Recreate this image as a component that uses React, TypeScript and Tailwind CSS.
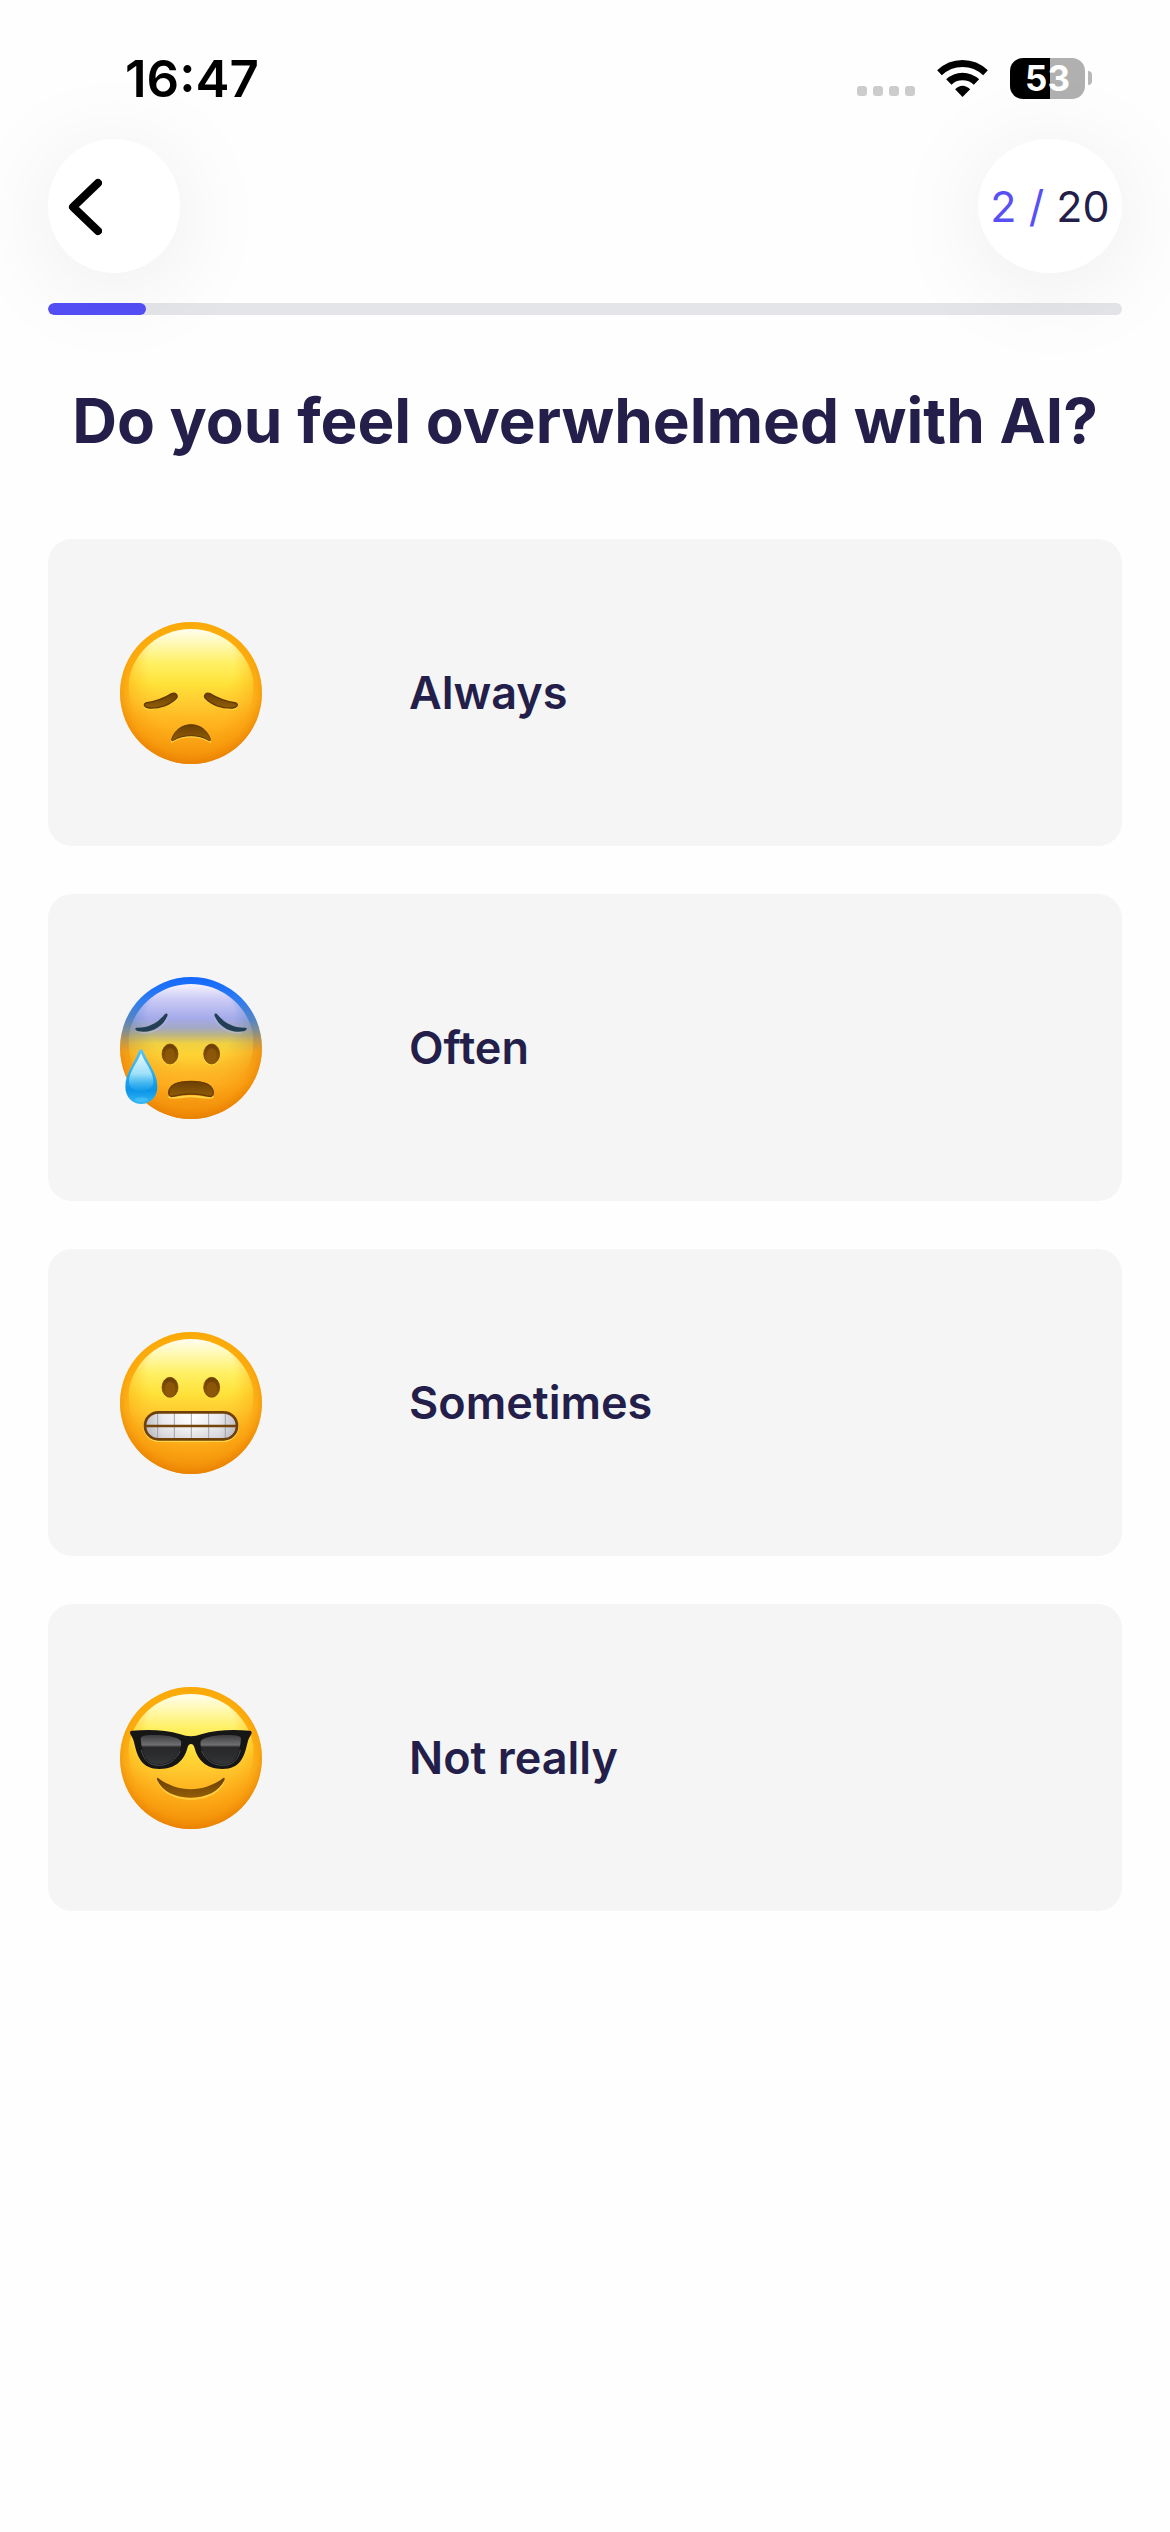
import type { ReactNode } from "react";

const INK = "text-[#231f4a]";

/* Shared round base of every emoji: amber rim, golden body, glossy forehead. */
function Face({ id, cold = false, children }: { id: string; cold?: boolean; children: ReactNode }) {
  return (
    <svg viewBox="60 66 426 426" className="size-[142px] shrink-0" aria-hidden="true">
      <defs>
        <linearGradient id={`${id}-body`} x1="0" y1="0" x2="0" y2="1">
          {cold ? (
            <>
              <stop offset="0" stopColor="#1268fb" />
              <stop offset="0.16" stopColor="#2d7cf0" />
              <stop offset="0.3" stopColor="#5584c4" />
              <stop offset="0.41" stopColor="#95937c" />
              <stop offset="0.53" stopColor="#f3a824" />
              <stop offset="0.75" stopColor="#ffac1f" />
              <stop offset="1" stopColor="#f29110" />
            </>
          ) : (
            <>
              <stop offset="0" stopColor="#fdb20a" />
              <stop offset="0.3" stopColor="#ffb714" />
              <stop offset="0.55" stopColor="#ffc026" />
              <stop offset="0.75" stopColor="#ffb01c" />
              <stop offset="1" stopColor="#f59710" />
            </>
          )}
        </linearGradient>
        <linearGradient id={`${id}-gloss`} x1="0" y1="0" x2="0" y2="1">
          {cold ? (
            <>
              <stop offset="0" stopColor="#f6f4ff" />
              <stop offset="0.12" stopColor="#cdccf6" />
              <stop offset="0.28" stopColor="#a5abea" />
              <stop offset="0.36" stopColor="#a3a8c4" />
              <stop offset="0.42" stopColor="#bdb582" />
              <stop offset="0.49" stopColor="#f0d140" />
              <stop offset="0.58" stopColor="#ffd234" />
              <stop offset="0.78" stopColor="#ffc02a" stopOpacity="0.6" />
              <stop offset="1" stopColor="#ffae20" stopOpacity="0" />
            </>
          ) : (
            <>
              <stop offset="0" stopColor="#fffef0" />
              <stop offset="0.12" stopColor="#fff9b4" />
              <stop offset="0.28" stopColor="#fff064" />
              <stop offset="0.45" stopColor="#ffe23a" />
              <stop offset="0.65" stopColor="#ffca32" stopOpacity="0.7" />
              <stop offset="0.9" stopColor="#ffae20" stopOpacity="0" />
            </>
          )}
        </linearGradient>
        <radialGradient id={`${id}-rim`} cx="0.5" cy="0.46" r="0.54">
          <stop offset="0.6" stopColor="#f58f00" stopOpacity="0" />
          <stop offset="0.85" stopColor="#f28a00" stopOpacity="0.35" />
          <stop offset="1" stopColor="#e67c00" stopOpacity="0.8" />
        </radialGradient>
        <linearGradient id={`${id}-fade`} x1="0" y1="0" x2="0" y2="1">
          <stop offset={cold ? "0.38" : "0"} stopColor={cold ? "#000" : "#999"} />
          <stop offset="0.56" stopColor="#fff" />
        </linearGradient>
        <mask id={`${id}-mask`} maskUnits="userSpaceOnUse" x="60" y="66" width="426" height="426">
          <rect x="60" y="66" width="426" height="426" fill={`url(#${id}-fade)`} />
        </mask>
        <radialGradient id={`${id}-side`} cx="0.5" cy="0.3" r="0.55">
          <stop offset="0.55" stopColor="#fff" />
          <stop offset="1" stopColor="#fff" stopOpacity="0.15" />
        </radialGradient>
        <mask id={`${id}-glossmask`} maskUnits="userSpaceOnUse" x="60" y="66" width="426" height="426">
          <rect x="60" y="66" width="426" height="426" fill={`url(#${id}-side)`} />
        </mask>
        <linearGradient id={`${id}-brown`} x1="0" y1="0" x2="0" y2="1">
          <stop offset="0" stopColor="#6b3f03" />
          <stop offset="1" stopColor="#925d08" />
        </linearGradient>
      </defs>
      <circle cx="273" cy="279" r="213" fill={`url(#${id}-body)`} />
      <circle cx="273" cy="279" r="213" fill={`url(#${id}-rim)`} mask={`url(#${id}-mask)`} />
      <path
        d="M273 87c94 0 170 66 186 150 12 120-70 215-186 215S75 357 87 237c16-84 92-150 186-150Z"
        fill={`url(#${id}-gloss)`}
        mask={`url(#${id}-glossmask)`}
      />
      {children}
    </svg>
  );
}

function Eyes({ id, y }: { id: string; y: number }) {
  return (
    <>
      {[210, 335].map((x) => (
        <g key={x}>
          <ellipse cx={x} cy={y + 2} rx="26" ry="32" fill="#ffe04a" opacity="0.7" />
          <ellipse cx={x} cy={y} rx="24" ry="30" fill={`url(#${id}-brown)`} stroke="#6b3d02" strokeWidth="2" />
          <ellipse cx={x} cy={y + 3} rx="15" ry="20" fill="#90590a" opacity="0.8" />
        </g>
      ))}
    </>
  );
}

function Disappointed() {
  return (
    <Face id="sad">
      <g fill="none" stroke="#ffe14d" strokeWidth="19" strokeLinecap="round" strokeLinejoin="round">
        <path d="M143 319Q190 316 223 290" />
        <path d="M402 319Q355 316 322 290" />
      </g>
      <g fill="url(#sad-brown)" stroke="#5f3802" strokeWidth="4" strokeLinejoin="round">
        <path d="M137 309c30-4 56-14 78-28 11-5 21 5 14 14-18 19-50 31-82 29-13 0-18-12-10-15Z" />
        <path d="M408 309c-30-4-56-14-78-28-11-5-21 5-14 14 18 19 50 31 82 29 13 0 18-12 10-15Z" />
      </g>
      <path d="M215 426c18-12 38-16 58-16s40 4 58 16" fill="none" stroke="#ffd247" strokeWidth="5" strokeLinecap="round" />
      <path
        d="M273 374c28 0 50 18 58 44 1 4-2 5-5 3-14-9-34-14-53-14s-39 5-53 14c-3 2-6 1-5-3 8-26 30-44 58-44Z"
        fill="url(#sad-brown)"
        stroke="#5f3802"
        strokeWidth="3"
      />
    </Face>
  );
}

function Anxious() {
  return (
    <Face id="cold" cold>
      <g fill="#223f55">
        <path d="M109 218c36 1 64-14 84-39 5-6 12-3 9 4-13 32-46 52-85 46-10-2-15-9-8-11Z" />
        <path d="M437 218c-36 1-64-14-84-39-5-6-12-3-9 4 13 32 46 52 85 46 10-2 15-9 8-11Z" />
      </g>
      <g fill="none" stroke="#b9bde6" strokeWidth="3" strokeLinecap="round" opacity="0.7">
        <path d="M122 233c38 4 64-12 80-42" />
        <path d="M424 233c-38 4-64-12-80-42" />
      </g>
      <Eyes id="cold" y={297} />
      <path d="M208 426c12 6 36-2 65-2s52 8 65 2" fill="none" stroke="#ffd543" strokeWidth="6" strokeLinecap="round" />
      <path
        d="M273 379c41 0 66 8 67 34 0 12-7 13-18 10-14-4-31-6-49-6s-35 2-49 6c-11 3-18 2-18-10 1-26 26-34 67-34Z"
        fill="url(#cold-brown)"
        stroke="#6b3d02"
        strokeWidth="4"
      />
      <defs>
        <linearGradient id="drop" x1="0" y1="0" x2="0" y2="1">
          <stop offset="0" stopColor="#5ec5f2" />
          <stop offset="0.45" stopColor="#29acef" />
          <stop offset="0.75" stopColor="#0b94e8" />
          <stop offset="1" stopColor="#38b9f6" />
        </linearGradient>
        <linearGradient id="dropshine" x1="0" y1="0" x2="0" y2="1">
          <stop offset="0" stopColor="#e6faff" />
          <stop offset="0.55" stopColor="#9ddff8" />
          <stop offset="1" stopColor="#35b4f2" stopOpacity="0.2" />
        </linearGradient>
      </defs>
      <path d="M123 283c4 0 6 4 8 9 14 35 41 64 41 103 0 31-21 52-48 52s-48-21-48-52c0-39 26-68 39-103 2-5 4-9 8-9Z" fill="url(#drop)" />
      <path d="M123 295c13 31 37 55 37 85 0 17-16 28-37 28s-36-11-36-28c0-30 24-54 36-85Z" fill="url(#dropshine)" />
      <ellipse cx="124" cy="434" rx="20" ry="7" fill="#5fd3fc" opacity="0.4" />
    </Face>
  );
}

function Grimacing() {
  return (
    <Face id="grim">
      <Eyes id="grim" y={232} />
      <defs>
        <linearGradient id="teeth" x1="0" y1="0" x2="1" y2="0">
          <stop offset="0" stopColor="#b9b9c0" />
          <stop offset="0.2" stopColor="#ececf0" />
          <stop offset="0.5" stopColor="#ffffff" />
          <stop offset="0.8" stopColor="#ececf0" />
          <stop offset="1" stopColor="#b9b9c0" />
        </linearGradient>
        <linearGradient id="teethshade" x1="0" y1="0" x2="0" y2="1">
          <stop offset="0" stopColor="#fff" stopOpacity="0" />
          <stop offset="1" stopColor="#8c8c98" stopOpacity="0.3" />
        </linearGradient>
      </defs>
      <rect x="130" y="303" width="286" height="93" rx="46" fill="#ffd84a" />
      <rect x="134" y="306" width="278" height="83" rx="40" fill="url(#teeth)" />
      <rect x="134" y="306" width="278" height="83" rx="40" fill="url(#teethshade)" />
      <path d="M173 309v77M223 309v77M274 309v77M326 309v77M376 309v77" stroke="#a2a2a9" strokeWidth="3" />
      <path d="M136 348H410" stroke="#74450b" strokeWidth="7" />
      <rect x="135" y="307" width="276" height="81" rx="40" fill="none" stroke="#70400a" strokeWidth="8" />
    </Face>
  );
}

function Sunglasses() {
  return (
    <Face id="cool">
      <defs>
        <linearGradient id="lens" x1="0" y1="0" x2="0" y2="1">
          <stop offset="0" stopColor="#3c3c3e" />
          <stop offset="0.34" stopColor="#6f6f71" />
          <stop offset="0.42" stopColor="#28282a" />
          <stop offset="0.7" stopColor="#2b2d2f" />
          <stop offset="1" stopColor="#343638" />
        </linearGradient>
      </defs>
      <path d="M172 347c50 70 152 70 202 0-22 76-180 76-202 0Z" fill="#ffd84a" opacity="0.8" />
      <path
        d="M174 339c62 45 134 45 196 0 4-2 5 2 3 7-16 34-54 52-101 52s-85-18-100-52c-2-5-1-9 2-7Z"
        fill="url(#cool-brown)"
      />
      <path
        d="M96 197c50-4 102-3 145 11 21 8 42 8 63 0 43-14 95-15 145-11 6 0 7 4 5 10-4 8-8 13-11 24-10 44-21 81-76 81-50 0-74-28-83-62-3-17-19-17-22 0-9 34-33 62-83 62-55 0-67-37-77-81-3-11-7-16-11-24-2-6-1-10 5-10Z"
        fill="#161617"
      />
      <g fill="url(#lens)">
        <path d="M122 219c5-9 23-10 52-9 35 1 66 10 69 19 4 26-20 67-64 69-37 1-53-23-57-79Z" />
        <path d="M423 219c-5-9-23-10-52-9-35 1-66 10-69 19-4 26 20 67 64 69 37 1 53-23 57-79Z" />
      </g>
      <g fill="none" stroke="#4b4f51" strokeWidth="3" strokeLinecap="round">
        <path d="M124 256c7 30 25 46 54 45 30 0 51-19 62-42" />
        <path d="M421 256c-7 30-25 46-54 45-30 0-51-19-62-42" />
      </g>
    </Face>
  );
}

const OPTIONS: { label: string; icon: ReactNode }[] = [
  { label: "Always", icon: <Disappointed /> },
  { label: "Often", icon: <Anxious /> },
  { label: "Sometimes", icon: <Grimacing /> },
  { label: "Not really", icon: <Sunglasses /> },
];

function StatusBar() {
  return (
    <div className="flex h-[44px] items-center justify-between pr-[78px] pl-[125px] text-black">
      <time className="text-[51px] leading-none font-semibold">16:47</time>
      <div className="flex items-center">
        <div className="mt-[26px] flex gap-[6px]">
          {[0, 1, 2, 3].map((dot) => (
            <span key={dot} className="size-[10px] rounded-[3px] bg-[#cccccc]" />
          ))}
        </div>
        <svg viewBox="348 177 152 111" className="ml-[22px] h-[37px] w-[51px]" aria-label="Wi-Fi" role="img">
          <path d="M348 208Q380 177 424 177T500 208L486 223Q460 198 424 198T362 223Z" />
          <path d="M375 235Q396 215 424 215T474 235L458 251Q444 238 424 238T391 251Z" />
          <path d="M402 265Q412 254 424 254T447 265L424 288Z" />
        </svg>
        <div className="ml-[22px] flex items-center gap-[3px]">
          <div className="flex h-[41px] w-[75px] items-center justify-center rounded-[13px] bg-linear-to-r from-black from-53% to-[#b0b0b0] to-53% text-[35px] leading-none font-bold text-white">
            53
          </div>
          <span className="h-[14px] w-[4px] rounded-r-full bg-[#b8b8b8]" />
        </div>
      </div>
    </div>
  );
}

export default function App() {
  return (
    <div className="min-h-screen overflow-x-hidden bg-[#fefefe] pt-14 font-['Inter',sans-serif]">
      <StatusBar />
      <main className="px-12 pt-[39px]">
        <div className="flex items-center justify-between">
          <button
            type="button"
            aria-label="Back"
            className="flex h-[134px] w-[132px] items-center rounded-full bg-white pt-[2px] pl-[20px] shadow-[0_12px_100px_rgba(0,0,0,0.08)]"
          >
            <svg viewBox="0 0 34 58" className="h-[58px] w-[34px]" fill="none" stroke="#000" strokeWidth="8" strokeLinecap="round" strokeLinejoin="round">
              <path d="M30 5L5 29L30 53" />
            </svg>
          </button>
          <p className={`flex h-[134px] w-[144px] items-center justify-center rounded-[50%] bg-white text-[43px] shadow-[0_12px_100px_rgba(0,0,0,0.08)] ${INK}`}>
            <span className="whitespace-pre text-[#5850f5]">2 / </span>20
          </p>
        </div>
        <div
          role="progressbar"
          aria-label="Quiz progress"
          aria-valuemin={0}
          aria-valuemax={20}
          aria-valuenow={2}
          className="mt-[30px] h-3 overflow-hidden rounded-full bg-[#e4e5e9]"
        >
          <div className="h-full w-[98px] rounded-full bg-[#544ff6]" />
        </div>
        <h1 className={`mt-[66px] text-center text-[62px] leading-[80px] font-bold whitespace-nowrap ${INK}`}>
          Do you feel overwhelmed with AI?
        </h1>
        <ul className="mt-[78px] flex flex-col gap-12">
          {OPTIONS.map((option) => (
            <li key={option.label}>
              <button type="button" className={`flex h-[307px] w-full items-center gap-[147px] rounded-[24px] bg-[#f5f5f5] px-[72px] text-left text-[45px] font-semibold ${INK}`}>
                {option.icon}
                {option.label}
              </button>
            </li>
          ))}
        </ul>
      </main>
    </div>
  );
}
